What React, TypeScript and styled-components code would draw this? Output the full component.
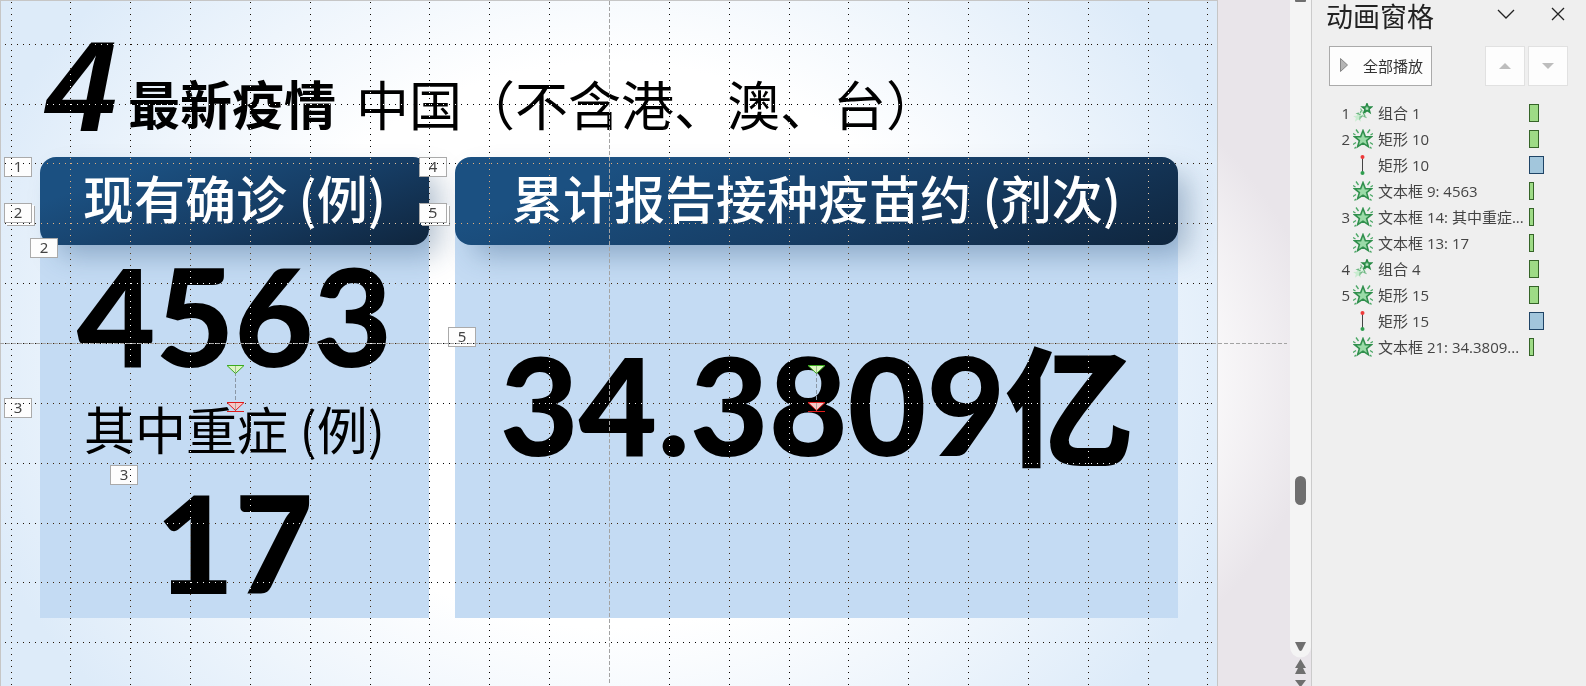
import React from "react";
import styled, { createGlobalStyle } from "styled-components";

const Global = createGlobalStyle`
  * { box-sizing: border-box; }
  body { margin: 0; }
  h1, h2, p, ol { margin: 0; padding: 0; }
`;

const slideFont = `"Noto Sans CJK SC", sans-serif`;
const uiFont = `"Open Sans", "Noto Sans CJK SC", sans-serif`;

const Window = styled.div`
  display: flex;
  min-height: 100vh;
  background: #efefef;
`;

const Workspace = styled.main`
  flex: 1;
  min-width: 0;
  display: flex;
  overflow: hidden;
  position: relative;
  background: radial-gradient(ellipse 54% 64% at 47% 54%, #fff 78%, #e9e5ea 100%);
`;

const Slide = styled.section`
  position: relative;
  flex: 1;
  min-width: 0;
  padding: 32px 39px 67px 39px;
  border: 1px solid #c6c6c6;
  background: radial-gradient(ellipse 57% 82% at 50% 50%, #fff 50%, #ddebf9 96%);
  font-family: ${slideFont};
  color: #000;
`;

const Heading = styled.h1`
  display: flex;
  align-items: flex-start;
  height: 124px;
  padding-left: 6px;
  font-size: 53px;
  font-weight: 400;
  line-height: 140px;
  white-space: nowrap;
`;

const Issue = styled.span`
  width: 82px;
  font-family: "Liberation Sans Narrow", "Liberation Sans", sans-serif;
  font-size: 128px;
  font-weight: 700;
  font-style: italic;
  line-height: 108px;
`;

const Strong = styled.strong`
  margin-right: 20px;
  font-size: 52px;
  font-weight: 700;
`;

const Cards = styled.div`
  display: grid;
  grid-template-columns: 389fr 723fr;
  gap: 26px;
`;

const Card = styled.article`
  position: relative;
  height: 461px;
  background: linear-gradient(transparent 40px, #c4dbf3 40px);
`;

const CardTitle = styled.h2`
  height: 88px;
  border-radius: 16px;
  background: linear-gradient(160deg, #1b5081 20%, #163c63 60%, #0f253d 100%);
  box-shadow: 14px 14px 28px -4px rgba(30, 70, 115, 0.34);
  color: #fff;
  font-size: 51px;
  font-weight: 500;
  line-height: 80px;
  text-align: center;
`;

const SubTitle = styled.p`
  padding-top: 11px;
  font-size: 51px;
  line-height: 64px;
  text-align: center;
`;

const Figure = styled.p<{ $space?: number }>`
  padding-top: ${(p) => p.$space ?? 0}px;
  font-family: Lato, "Noto Sans CJK SC", sans-serif;
  font-size: 136px;
  font-weight: 900;
  line-height: 140px;
  text-align: center;
  white-space: nowrap;
`;

const Unit = styled.span`
  font-size: 128px;
`;

const Tag = styled.span<{ $x: number; $y: number; $stacked?: boolean }>`
  position: absolute;
  left: ${(p) => p.$x}px;
  top: ${(p) => p.$y}px;
  width: 28px;
  height: 20px;
  border: 1px solid #aaa;
  background: #fdfdfd;
  box-shadow: ${(p) => (p.$stacked ? "2px 2px 0 #fdfdfd, 3px 3px 0 #aaa" : "none")};
  color: #444;
  font: 15px/16px "Noto Sans", sans-serif;
  text-align: center;
`;

const Overlay = styled.svg<{ $invert?: boolean }>`
  position: absolute;
  left: 0;
  top: 0;
  overflow: visible;
  pointer-events: none;
  mix-blend-mode: ${(p) => (p.$invert ? "difference" : "normal")};
`;

const Gutter = styled.div`
  width: 72px;
`;

const ScrollBar = styled.div`
  position: relative;
  width: 21px;
`;

const Pane = styled.aside`
  width: 275px;
  border-left: 1px solid #cbcbcb;
  background: #efefef;
  color: #444;
  font-family: ${uiFont};
  font-size: 15px;
`;

const PaneHeader = styled.header`
  display: flex;
  align-items: center;
  height: 34px;
  padding: 0 19px 0 14px;
`;

const PaneTitle = styled.h2`
  flex: 1;
  color: #222;
  font-size: 27px;
  font-weight: 400;
  line-height: 34px;
`;

const IconButton = styled.button`
  display: flex;
  padding: 0;
  margin-left: 34px;
  margin-bottom: 6px;
  border: 0;
  background: none;
`;

const Tools = styled.div`
  display: flex;
  gap: 3px;
  padding: 12px 18px 14px 17px;
`;

const PlayButton = styled.button`
  display: flex;
  align-items: center;
  gap: 15px;
  width: 103px;
  height: 40px;
  margin-right: auto;
  padding: 0 0 2px 10px;
  border: 1px solid #aaa;
  background: #fdfdfd;
  color: #333;
  font: 15px ${uiFont};
  white-space: nowrap;
`;

const MoveButton = styled.button`
  display: flex;
  align-items: center;
  justify-content: center;
  width: 40px;
  height: 40px;
  padding: 0;
  border: 1px solid #e1e1e1;
  background: #fdfdfd;
`;

const Effects = styled.ol`
  list-style: none;
`;

const Effect = styled.li`
  display: grid;
  grid-template-columns: 23px 20px 150px auto;
  column-gap: 3px;
  align-items: center;
  height: 26px;
  padding-left: 15px;
  line-height: 26px;
`;

const Order = styled.span`
  text-align: right;
`;

const EffectName = styled.span`
  padding-left: 2px;
  overflow: hidden;
  white-space: nowrap;
`;

const Bar = styled.span<{ $kind: Kind }>`
  width: ${(p) => ({ group: 10, burst: 10, line: 15, text: 5 })[p.$kind]}px;
  height: 18px;
  border: 1px solid ${(p) => (p.$kind === "line" ? "#1f4466" : "#356428")};
  background: ${(p) => (p.$kind === "line" ? "#a2c6dc" : "#9edb86")};
`;

type Kind = "group" | "burst" | "line" | "text";

const effects: { order?: number; kind: Kind; name: string }[] = [
  { order: 1, kind: "group", name: "组合 1" },
  { order: 2, kind: "burst", name: "矩形 10" },
  { kind: "line", name: "矩形 10" },
  { kind: "text", name: "文本框 9: 4563" },
  { order: 3, kind: "text", name: "文本框 14: 其中重症..." },
  { kind: "text", name: "文本框 13: 17" },
  { order: 4, kind: "group", name: "组合 4" },
  { order: 5, kind: "burst", name: "矩形 15" },
  { kind: "line", name: "矩形 15" },
  { kind: "text", name: "文本框 21: 34.3809..." },
];

const STAR = "M0-10 2.600-3.200 9.500-3.100 4 1.200 6 8 0 4-6 8-4 1.200-9.500-3.100-2.600-3.200Z";

function EffectIcon({ kind }: { kind: Kind }) {
  if (kind === "line")
    return (
      <svg width="20" height="20" viewBox="0 0 20 20">
        <path d="M9.500 3V17" stroke="#444" />
        <circle cx="9.500" cy="2" r="2" fill="#ee3a3a" />
        <circle cx="9.500" cy="18" r="2" fill="#2f9e4f" />
      </svg>
    );
  if (kind === "group")
    return (
      <svg width="20" height="20" viewBox="0 0 20 20">
        <path d={STAR} transform="translate(5 14.500) scale(.52)" fill="#c9ecd0" />
        <path d={STAR} transform="translate(9 11) rotate(-12) scale(.46)" fill="#e3f3e6" stroke="#6fb883" strokeWidth="2.800" strokeDasharray="5 2" />
        <path d={STAR} transform="translate(14 5.500) scale(.48)" fill="#b5e3c0" stroke="#278a45" strokeWidth="3.200" />
      </svg>
    );
  return (
    <svg width="20" height="20" viewBox="0 0 20 20">
      <path d="M3 .5 5.500 4M17 .5 14.500 4M0 4.500 2.500 6M20 4.500 17.500 6M0 15.500 3 13.500M20 15.500 17 13.500M1.500 19.500 3 18M18.500 19.500 17 18" stroke="#4ba866" strokeWidth="1.300" />
      <path d={STAR} transform="translate(10 10.500) scale(.9)" fill="#9bdba8" stroke="#318f4d" strokeWidth="1.700" />
    </svg>
  );
}

const columns = [11, 70, 130, 190, 250, 310, 370, 429, 489, 549, 669, 729, 789, 848, 908, 968, 1028, 1088, 1148, 1207];
const rows = [44, 104, 163, 223, 283, 343, 403, 463, 523, 582, 642];

/* Snap grid: every cell restarts its own run of dots. */
function GridDots() {
  return (
    <Overlay $invert width="1217" height="684" shapeRendering="crispEdges" aria-hidden>
      <g stroke="#fff" strokeDasharray="1 5" fill="none">
        {columns.map((x) => [-16, ...rows].map((y) => (
          <path key={`${x}-${y}`} d={`M${x - 0.5} ${y - 1}V${Math.min(y + 58, 684)}`} />
        )))}
        {rows.map((y) => (
          <path key={y} d={`M4 ${y - 0.5}H1215`} />
        ))}
      </g>
    </Overlay>
  );
}

function MotionPath({ x }: { x: number }) {
  return (
    <g>
      <path d={`M${x + 0.5} 366V411`} stroke="#8a97a5" strokeDasharray="4 2" />
      <path d={`M${x - 8} 365.500H${x + 9}L${x + 0.5} 373.500Z`} fill="#dcf7c0" stroke="#3bab1e" />
      <path d={`M${x - 8} 402.500H${x + 9}L${x + 0.5} 410.500Z`} fill="#f8c6c6" stroke="#e01b1b" />
      <path d={`M${x - 8} 411.500H${x + 9}`} stroke="#e01b1b" />
      <path d={`M${x + 0.5} 366V373M${x + 0.5} 403V410`} stroke="#7d8d78" strokeOpacity=".6" />
    </g>
  );
}

export default function App() {
  return (
    <>
      <Global />
      <Window>
        <Workspace>
          <Slide>
            <Heading>
              <Issue>4</Issue>
              <Strong>最新疫情</Strong>
              <span>中国（不含港、澳、台）</span>
            </Heading>
            <Cards>
              <Card>
                <CardTitle>现有确诊 (例)</CardTitle>
                <Figure>4563</Figure>
                <SubTitle>其中重症 (例)</SubTitle>
                <Figure $space={12}>17</Figure>
              </Card>
              <Card>
                <CardTitle>累计报告接种疫苗约 (剂次)</CardTitle>
                <Figure $space={89}>34.3809<Unit>亿</Unit></Figure>
              </Card>
            </Cards>
            <Tag $x={3} $y={156}>1</Tag>
            <Tag $x={3} $y={202} $stacked>2</Tag>
            <Tag $x={29} $y={237}>2</Tag>
            <Tag $x={3} $y={397}>3</Tag>
            <Tag $x={109} $y={464}>3</Tag>
            <Tag $x={418} $y={156}>4</Tag>
            <Tag $x={418} $y={202} $stacked>5</Tag>
            <Tag $x={447} $y={326}>5</Tag>
            <GridDots />
            <Overlay width="1288" height="684" aria-hidden>
              <path d="M-1 342.500H1286M608.500 0V684" stroke="#a3a3a3" strokeDasharray="4 2" />
              <g transform="translate(-1 -1)">
                <MotionPath x={235} />
                <MotionPath x={816} />
              </g>
            </Overlay>
          </Slide>
          <Gutter />
          <ScrollBar>
            <svg width="21" height="686" viewBox="0 0 21 686" aria-hidden>
              <path d="M0 0H21V647A10.500 10.500 0 0 1 0 647Z" fill="#f4f4f4" />
              <g fill="#6f6f6f">
                <rect x="5" y="-2" width="11" height="4" rx="1" />
                <rect x="5" y="476" width="11" height="29" rx="5.500" />
                <path d="M5 642H16L12 650Q10.500 652 9 650Z" />
                <path d="M10.500 659 16 668H13L16 674H5L8 668H5Z" />
                <path d="M5 680H16L11.500 686H9.500Z" />
              </g>
            </svg>
          </ScrollBar>
        </Workspace>
        <Pane>
          <PaneHeader>
            <PaneTitle>动画窗格</PaneTitle>
            <IconButton aria-label="选项">
              <svg width="18" height="14" fill="none" stroke="#222" strokeWidth="1.300"><path d="M1 3 9 11 17 3" /></svg>
            </IconButton>
            <IconButton aria-label="关闭">
              <svg width="18" height="14" fill="none" stroke="#222" strokeWidth="1.300"><path d="M3 1 15 13M15 1 3 13" /></svg>
            </IconButton>
          </PaneHeader>
          <Tools>
            <PlayButton>
              <svg width="8" height="14"><path d="M.5 .5V13.500L7.500 7Z" fill="#b5b5b5" stroke="#858585" /></svg>
              全部播放
            </PlayButton>
            <MoveButton aria-label="上移">
              <svg width="12" height="6"><path d="M0 6 6 0 12 6Z" fill="#bdbdbd" /></svg>
            </MoveButton>
            <MoveButton aria-label="下移">
              <svg width="12" height="6"><path d="M0 0 6 6 12 0Z" fill="#bdbdbd" /></svg>
            </MoveButton>
          </Tools>
          <Effects>
            {effects.map((e, i) => (
              <Effect key={i}>
                <Order>{e.order}</Order>
                <EffectIcon kind={e.kind} />
                <EffectName>{e.name}</EffectName>
                <Bar $kind={e.kind} />
              </Effect>
            ))}
          </Effects>
        </Pane>
      </Window>
    </>
  );
}
